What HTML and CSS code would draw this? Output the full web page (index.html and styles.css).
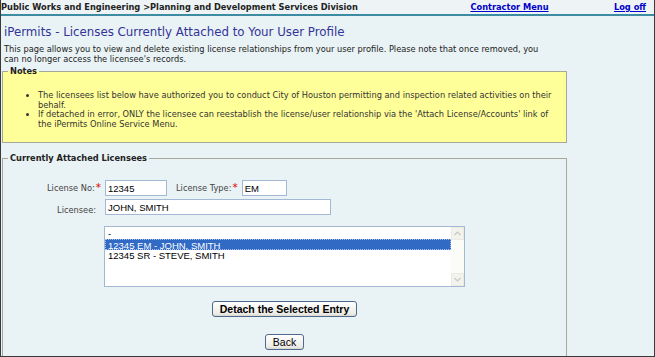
FILE: index.html
```html
<!doctype html>
<html lang="en">
<head>
    <meta charset="UTF-8">
    <title>iPermits - Licenses Currently Attached to Your User Profile</title>
    <link rel="stylesheet" href="styles.css">
</head>
<body>

<div class="frame">
    <div class="topbar">
        <div class="crumb">Public Works and Engineering &gt;Planning and Development Services Division</div>
        <div class="top-link"><a href="#">Contractor Menu</a></div>
        <div class="top-link top-link-right"><a href="#">Log off</a></div>
    </div>

    <div class="content">
        <h1 class="title">iPermits - Licenses Currently Attached to Your User Profile</h1>
        <p class="intro">This page allows you to view and delete existing license relationships from your user profile. Please note that once removed, you can no longer access the licensee's records.</p>

        <fieldset class="box box-notes">
            <legend>Notes</legend>
            <ul class="notes">
                <li>The licensees list below have authorized you to conduct City of Houston permitting and inspection related activities on their behalf.</li>
                <li>If detached in error, ONLY the licensee can reestablish the license/user relationship via the 'Attach License/Accounts' link of the iPermits Online Service Menu.</li>
            </ul>
        </fieldset>

        <fieldset class="box box-licensees">
            <legend>Currently Attached Licensees</legend>

            <div class="form-row">
                <label class="field-label">License No:<span class="req">*</span></label>
                <input class="field field-no" type="text" value="12345">
                <label class="field-label-inline">License Type:<span class="req">*</span></label>
                <input class="field field-type" type="text" value="EM">
            </div>
            <div class="form-row form-row-name">
                <label class="field-label field-label-plain">Licensee:</label>
                <input class="field field-name" type="text" value="JOHN, SMITH">
            </div>

            <div class="listbox">
                <div class="list-items">
                    <div class="list-item">-</div>
                    <div class="list-item list-item-selected">12345 EM - JOHN, SMITH</div>
                    <div class="list-item">12345 SR - STEVE, SMITH</div>
                </div>
                <div class="scroll">
                    <div class="scroll-btn">
                        <svg width="7" height="5" viewBox="0 0 7 5"><path d="M0.5 4 L3.5 1 L6.5 4" fill="none" stroke="#c9c9c0" stroke-width="1.2"/></svg>
                    </div>
                    <div class="scroll-btn">
                        <svg width="7" height="5" viewBox="0 0 7 5"><path d="M0.5 1 L3.5 4 L6.5 1" fill="none" stroke="#c9c9c0" stroke-width="1.2"/></svg>
                    </div>
                </div>
            </div>

            <div class="actions">
                <button class="btn btn-bold" type="button">Detach the Selected Entry</button>
            </div>
            <div class="actions actions-back">
                <button class="btn" type="button">Back</button>
            </div>
        </fieldset>
    </div>
</div>

</body>
</html>
```

FILE: styles.css
```css
*{
    box-sizing: border-box;
}

body{
    margin: 0;
    background: #e9f2f4;
    font-family: Verdana, 'DejaVu Sans', sans-serif;
    font-size: 8.25px;
    color: #222;
}

.frame{
    width: 655px;
    height: 357px;
    border-left: 1px solid #3a3a3a;
    border-right: 1px solid #3a3a3a;
    border-bottom: 1px solid #3a3a3a;
    overflow: hidden;
    background: #e9f2f4;
}

.topbar{
    display: grid;
    grid-template-columns: 1fr 157px 66px;
    height: 16px;
    line-height: 14px;
    background: #eef4f5;
    border-bottom: 2px solid #3e8ca4;
    font-weight: bold;
}
.crumb{
    color: #222;
    white-space: nowrap;
}
.top-link{
    text-align: center;
}
.top-link-right{
    text-align: right;
    padding-right: 8px;
}
.top-link a{
    color: #0000cc;
}

.title{
    margin: 6px 0 0 3px;
    font-size: 11.8px;
    line-height: 20px;
    font-weight: normal;
    color: #333399;
}

.intro{
    margin: 3px 0 0 3px;
    max-width: 548px;
    line-height: 9.5px;
}

.box{
    width: 565px;
    margin: 0 0 0 1px;
    padding: 0 5px;
    border: 1px solid #a7a79c;
}
.box legend{
    padding: 0 2px;
    font-weight: bold;
    color: #222;
    line-height: 9px;
}

.box-notes{
    margin-top: 3px;
    height: 76px;
    background: #ffff99;
}
.notes{
    margin: 15px 0 0 0;
    padding-left: 30px;
    color: #333;
    line-height: 9.5px;
}

.box-licensees{
    margin-top: 11px;
    height: 220px;
}

.form-row{
    display: flex;
    align-items: center;
    margin-top: 17px;
    color: #444;
}
.form-row-name{
    margin-top: 3px;
}
.field-label{
    width: 95px;
    padding-right: 2px;
    text-align: right;
    white-space: nowrap;
}
.field-label-plain{
    align-self: flex-end;
    padding-right: 7px;
}
.field-label-inline{
    margin-left: 9px;
    margin-right: 4px;
    white-space: nowrap;
}
.req{
    color: #e00000;
    font-size: 10.5px;
    vertical-align: top;
    line-height: 8px;
    margin-left: 1px;
}
.field{
    margin: 0 0 0 2px;
    height: 16px;
    padding: 0 2px;
    border: 1px solid #a3b8d2;
    background: #fff;
    font-family: 'Liberation Sans', Arial, sans-serif;
    font-size: 9.5px;
    color: #000;
}
.field-no{
    width: 62px;
}
.field-type{
    width: 45px;
    margin-left: 0;
}
.field-name{
    width: 226px;
}

.listbox{
    display: flex;
    width: 361px;
    height: 61px;
    margin: 11px auto 0;
    border: 1px solid #a3b8d2;
    background: #fff;
    font-family: 'Liberation Sans', Arial, sans-serif;
    font-size: 9.5px;
    color: #000;
}
.list-items{
    flex: 1;
    padding-top: 1px;
}
.list-item{
    height: 11px;
    line-height: 11px;
    padding-left: 2px;
    border: 1px solid transparent;
    border-width: 0 1px;
}
.list-item-selected{
    background: #316ac5;
    color: #fff;
    border: 1px dotted #a9c2ea;
}
.scroll{
    width: 13px;
    display: flex;
    flex-direction: column;
    justify-content: space-between;
    background: #fbfbf8;
}
.scroll-btn{
    height: 13px;
    display: flex;
    justify-content: center;
    align-items: center;
    background: #f3f3ee;
    border: 1px solid #ebebe4;
}

.actions{
    margin-top: 14px;
    text-align: center;
}
.actions-back{
    margin-top: 17px;
}
.btn{
    height: 16px;
    padding: 0 7px;
    border: 1px solid #4d6a8c;
    border-radius: 3px;
    background: linear-gradient(#ffffff, #ecebe6 85%, #d8d6cc);
    font-family: 'Liberation Sans', Arial, sans-serif;
    font-size: 10.5px;
    color: #000;
}
.btn-bold{
    font-weight: bold;
    width: 145px;
    padding: 0;
}
```
